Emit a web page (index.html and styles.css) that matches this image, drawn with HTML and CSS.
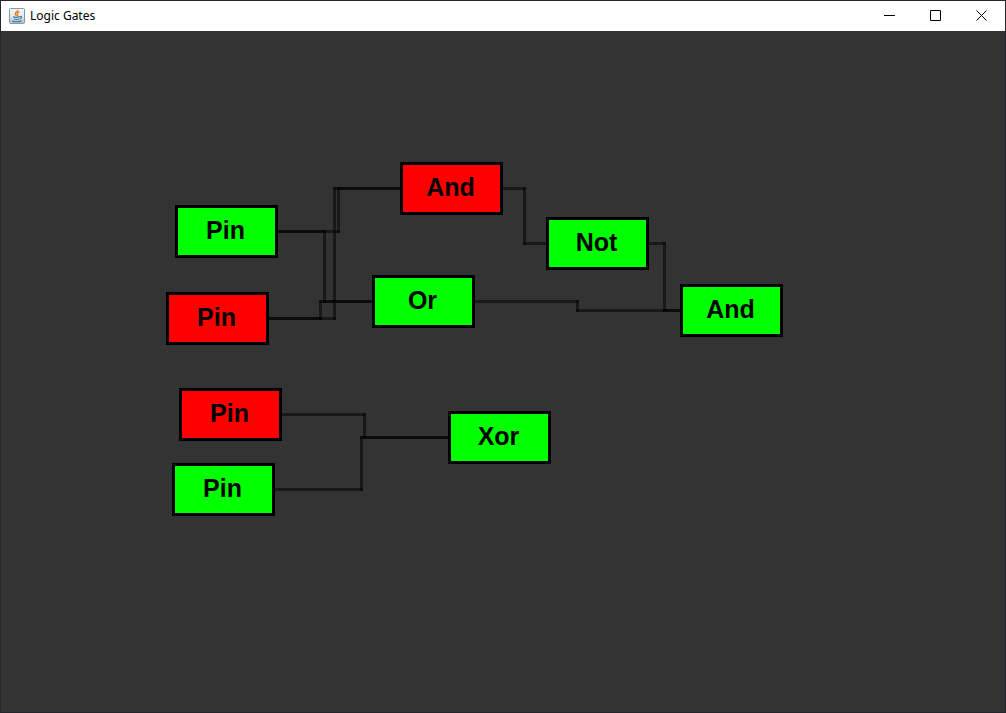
FILE: index.html
```html
<!DOCTYPE html>
<html lang="en">
<head>
<meta charset="utf-8">
<title>Logic Gates</title>
<link rel="stylesheet" href="styles.css">
</head>
<body>
<div class="window">
  <header class="titlebar">
    <svg class="app-icon" viewBox="0 0 16 16" aria-hidden="true">
      <defs>
        <linearGradient id="tile" x1="0" y1="0" x2="0" y2="1">
          <stop offset="0" stop-color="#f4f7f9"/>
          <stop offset="0.5" stop-color="#e3eaef"/>
          <stop offset="1" stop-color="#a9bfd0"/>
        </linearGradient>
      </defs>
      <rect x="0.5" y="0.5" width="15" height="15" rx="1" fill="url(#tile)" stroke="#8299ab"/>
      <path d="M8.800 1.800C9.300 3.600 5.600 4.200 6.300 6C6.600 6.800 7.400 7.200 7.300 8M10.500 3.800C8.500 4.600 7.900 5.300 8.500 6.300C8.900 7 8.600 7.500 8.200 8" fill="none" stroke="#ea7d1c" stroke-width="1.300"/>
      <path d="M4 8.800C5 9.500 9 9.500 10.500 8.800M10.500 8.600C13.400 8 13.200 10.300 10.600 11M5 11C6 11.500 9 11.500 10 11M3 13C5 14 10.500 14 12.500 12.800" fill="none" stroke="#447397" stroke-width="1.100"/>
    </svg>
    <h1 class="title">Logic Gates</h1>
    <div class="controls">
      <button class="control" type="button" aria-label="Minimize">
        <svg viewBox="0 0 11 11"><path d="M0 5.500H11"/></svg>
      </button>
      <button class="control" type="button" aria-label="Maximize">
        <svg viewBox="0 0 11 11"><path d="M0.500 0.500H10.500V10.500H0.500Z"/></svg>
      </button>
      <button class="control" type="button" aria-label="Close">
        <svg viewBox="0 0 11 11"><path d="M0.500 0.500L10.500 10.500M10.500 0.500L0.500 10.500"/></svg>
      </button>
    </div>
  </header>
  <main class="board">
    <svg class="wires" aria-hidden="true">
      <g transform="translate(-0.500 -30.500)">
        <path d="M277 231H338"/><path d="M338 231V188"/><path d="M338 188H401"/>
        <path d="M268 318H334"/><path d="M334 318V188"/><path d="M334 188H401"/>
        <path d="M277 231H324"/><path d="M324 231V301"/><path d="M324 301H373"/>
        <path d="M268 318H320"/><path d="M320 318V301"/><path d="M320 301H373"/>
        <path d="M502 188H524"/><path d="M524 188V243"/><path d="M524 243H547"/>
        <path d="M474 301H577"/><path d="M577 301V310"/><path d="M577 310H681"/>
        <path d="M648 243H664"/><path d="M664 243V310"/><path d="M664 310H681"/>
        <path d="M281 414H364"/><path d="M364 414V437"/><path d="M364 437H449"/>
        <path d="M274 489H361"/><path d="M361 489V437"/><path d="M361 437H449"/>
      </g>
    </svg>
    <div class="gate on pin-a">Pin</div>
    <div class="gate off pin-b">Pin</div>
    <div class="gate off pin-c">Pin</div>
    <div class="gate on pin-d">Pin</div>
    <div class="gate off and-a">And</div>
    <div class="gate on or-a">Or</div>
    <div class="gate on not-a">Not</div>
    <div class="gate on and-b">And</div>
    <div class="gate on xor-a">Xor</div>
  </main>
</div>
</body>
</html>
```

FILE: styles.css
```css
* {
  box-sizing: border-box;
}

body {
  margin: 0;
}

.window {
  display: flex;
  flex-direction: column;
  min-height: 100vh;
  border: 1px solid #25262b;
  background: #333333;
}

.titlebar {
  display: flex;
  align-items: center;
  height: 30px;
  padding-left: 8px;
  background: #ffffff;
}

.app-icon {
  width: 16px;
  height: 16px;
}

.title {
  margin: 0 auto 0 5px;
  font: 400 12px/16px "Noto Sans", "Open Sans", sans-serif;
  color: #000000;
}

.controls {
  display: flex;
  align-self: stretch;
}

.control {
  display: flex;
  align-items: center;
  justify-content: center;
  width: 46px;
  padding: 0 1px 1px 0;
  border: 0;
  background: transparent;
}

.control svg {
  width: 11px;
  height: 11px;
  fill: none;
  stroke: #000000;
  stroke-width: 1;
}

.board {
  position: relative;
  flex: 1;
  overflow: hidden;
}

.wires {
  position: absolute;
  inset: 0;
  width: 100%;
  height: 100%;
  fill: none;
  stroke: rgba(0, 0, 0, 0.5);
  stroke-width: 3;
  stroke-linecap: square;
}

/* Gates sit at free positions on the board. */
.gate {
  position: absolute;
  width: 103px;
  height: 53px;
  padding-right: 2px;
  border: 3px solid #000000;
  font: 700 25px/44px "Liberation Sans", Arial, sans-serif;
  text-align: center;
  color: #000000;
}

.on {
  background: #00ff00;
}

.off {
  background: #ff0000;
}

.pin-a { left: 174px; top: 174px; }
.pin-b { left: 165px; top: 261px; }
.pin-c { left: 178px; top: 357px; }
.pin-d { left: 171px; top: 432px; }
.and-a { left: 399px; top: 131px; }
.or-a { left: 371px; top: 244px; }
.not-a { left: 545px; top: 186px; }
.and-b { left: 679px; top: 253px; }
.xor-a { left: 447px; top: 380px; }
```
